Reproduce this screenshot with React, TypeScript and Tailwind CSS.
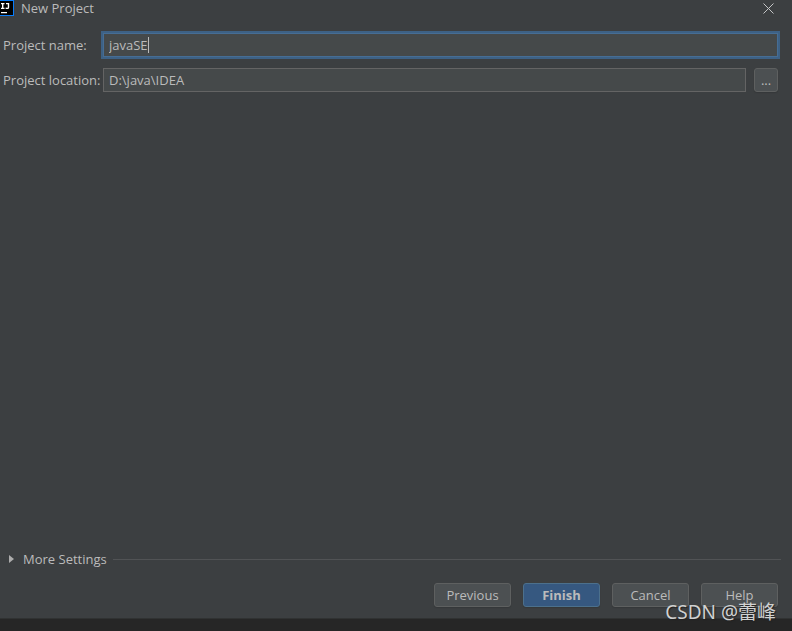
import { useState } from 'react'

const buttonClass =
  'h-6 w-[77px] rounded-[3px] border border-[#5e6060] bg-[#4c5052] text-[13px] leading-4 text-[#bbbbbb] shadow-[0_1px_1px_#35383a]'

function IdeaLogo() {
  return (
    <svg className="h-4 w-[14px]" viewBox="0 0 14 16" aria-hidden="true">
      <rect width="14" height="16" fill="#087cfa" />
      <rect y="1" width="13" height="14" fill="#000" />
      <path d="M1 3h3.5v1.2H3.4v3.6h1.1V9H1V7.8h1V4.2H1zM6 3h3.2v4.2c0 1.2-.8 1.9-2 1.9-.8 0-1.4-.3-1.9-.9l.8-.9c.3.4.6.6 1 .6s.7-.3.7-.8V4.2H6zM1 12h6v1.2H1z" fill="#fff" />
    </svg>
  )
}

function TitleBar() {
  return (
    <header className="flex h-4 items-center gap-[7px] pr-4">
      <IdeaLogo />
      <h1 className="flex-1 text-[13px] leading-4">New Project</h1>
      <button type="button" aria-label="Close" className="p-0.5">
        <svg className="size-[11px]" viewBox="0 0 11 11" aria-hidden="true">
          <path d="M0.5 0.5l10 10M10.5 0.5l-10 10" stroke="#c4c6c7" strokeWidth="1" fill="none" />
        </svg>
      </button>
    </header>
  )
}

export default function App() {
  const [name, setName] = useState('javaSE')
  const [location, setLocation] = useState('D:\\java\\IDEA')

  return (
    <div className="relative flex min-h-screen flex-col bg-[#262626] pb-3 font-['Open_Sans','Noto_Sans_CJK_SC',sans-serif] text-[13px] leading-4 text-[#bbbbbb]">
      <main className="flex flex-1 flex-col border-b border-[#303232] bg-[#3c3f41]">
        <TitleBar />

        <form className="mt-[17px] flex flex-col gap-[11px] pr-[14px] pl-[3px]">
          <div className="flex items-center">
            <label htmlFor="name" className="w-[100px] shrink-0">
              Project name:
            </label>
            <div className="relative flex-1">
              <input
                id="name"
                value={name}
                onChange={(e) => setName(e.target.value)}
                className="block h-6 w-full border border-[#466d94] bg-[#45494a] px-[5px] caret-transparent shadow-[0_0_0_2px_#3d6185] outline-none"
              />
              {/* text cursor sits right after the typed name */}
              <div className="pointer-events-none absolute inset-y-0 left-[6px] flex items-center">
                <span className="invisible">{name}</span>
                <span className="h-4 w-px bg-[#bbbbbb]" />
              </div>
            </div>
          </div>

          <div className="flex items-center">
            <label htmlFor="location" className="w-[100px] shrink-0">
              Project location:
            </label>
            <input
              id="location"
              value={location}
              onChange={(e) => setLocation(e.target.value)}
              className="h-6 min-w-0 flex-1 border border-[#646464] bg-[#45494a] px-[5px] outline-none"
            />
            <button
              type="button"
              aria-label="Browse"
              className="ml-2 size-6 rounded-[3px] border border-[#5e6060] bg-[#4c5052] leading-4 shadow-[0_1px_1px_#35383a]"
            >
              ...
            </button>
          </div>
        </form>

        <footer className="mt-auto pb-[11px]">
          <div className="flex items-center gap-[6px] pr-[11px] pl-2">
            <button type="button" className="flex items-center gap-2">
              <svg className="h-2 w-[7px]" viewBox="0 0 7 8" aria-hidden="true">
                <path d="M1 0l5 4-5 4z" fill="#adadad" />
              </svg>
              More Settings
            </button>
            <div className="h-px flex-1 bg-[#515355]" />
          </div>
          <div className="mt-4 flex justify-end gap-3 pr-[14px]">
            <button type="button" className={buttonClass}>
              Previous
            </button>
            <button
              type="button"
              className="h-6 w-[77px] rounded-[3px] border border-[#4c708c] bg-[#365880] text-[13px] leading-4 font-bold text-[#bbbbbb] shadow-[0_1px_1px_#35383a]"
            >
              Finish
            </button>
            <button type="button" className={buttonClass}>
              Cancel
            </button>
            <button type="button" className={buttonClass}>
              Help
            </button>
          </div>
        </footer>
      </main>

      <p className="pointer-events-none absolute right-4 bottom-[7px] font-['Noto_Sans','Noto_Sans_CJK_SC',sans-serif] text-[19px] leading-6 text-[#d0d1d1] [text-shadow:1px_1px_1px_#222]">
        CSDN @蕾峰
      </p>
    </div>
  )
}
